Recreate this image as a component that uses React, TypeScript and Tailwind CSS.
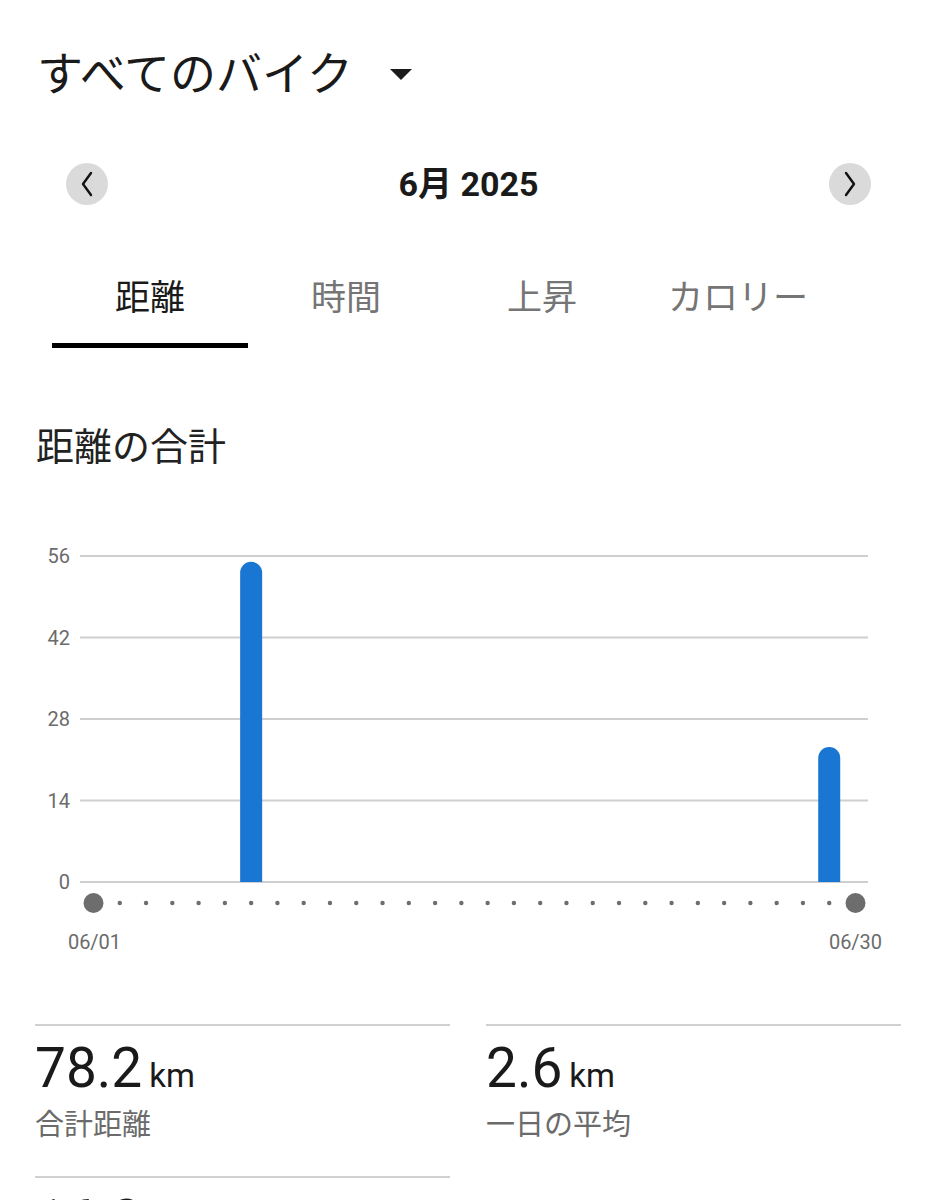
const bars = [
  { day: 7, value: 55.0 },
  { day: 29, value: 23.2 },
];

const stats = [
  { value: "78.2", unit: "km", label: "合計距離" },
  { value: "2.6", unit: "km", label: "一日の平均" },
  { value: "16.3", unit: "km/h", label: "平均速度" },
];

const tabs = ["距離", "時間", "上昇", "カロリー"];

function Chevron({ dir }: { dir: "left" | "right" }) {
  return (
    <svg width={16} height={26} viewBox="0 0 16 26">
      <path
        d={dir === "left" ? "M12 2 L4 13 L12 24" : "M4 2 L12 13 L4 24"}
        fill="none"
        stroke="#111"
        strokeWidth={2.4}
        strokeLinecap="round"
        strokeLinejoin="round"
      />
    </svg>
  );
}

function Chart() {
  // page y minus 520
  const top = 36;
  const zero = 362;
  const left = 80;
  const right = 868;
  const x0 = 93.5;
  const step = (855.5 - 93.5) / 29;
  const ticks = [56, 42, 28, 14, 0];
  const yOf = (v: number) => zero - ((zero - top) * v) / 56;

  return (
    <svg width={936} height={440} className="block">
      {ticks.map((t) => (
        <g key={t}>
          <line x1={left} x2={right} y1={yOf(t)} y2={yOf(t)} stroke="#cfcfcf" strokeWidth={2} />
          <text x={70} y={yOf(t) + 7} textAnchor="end" fontSize={20} fill="#6b6b6b" fontFamily="Roboto, sans-serif">
            {t}
          </text>
        </g>
      ))}
      {bars.map((b) => {
        const cx = x0 + step * (b.day - 1);
        const y = yOf(b.value);
        return (
          <path
            key={b.day}
            d={`M${cx - 11} ${zero} V${y + 11} A11 11 0 0 1 ${cx + 11} ${y + 11} V${zero} Z`}
            fill="#1976d2"
          />
        );
      })}
      {Array.from({ length: 30 }, (_, i) => {
        const cx = x0 + step * i;
        const big = i === 0 || i === 29;
        return <circle key={i} cx={cx} cy={383} r={big ? 10 : 2.2} fill="#6d6d6d" />;
      })}
      <text x={94.5} y={429} textAnchor="middle" fontSize={20} fill="#6b6b6b" fontFamily="Roboto, sans-serif">
        06/01
      </text>
      <text x={855.5} y={429} textAnchor="middle" fontSize={20} fill="#6b6b6b" fontFamily="Roboto, sans-serif">
        06/30
      </text>
    </svg>
  );
}

export default function App() {
  return (
    <div className="h-[1200px] w-[936px] overflow-hidden bg-white font-[Roboto,'Noto_Sans_CJK_JP',sans-serif] text-[#1a1a1a]">
      <div className="flex items-center pl-[37px] pt-[51px]">
        <h1 className="text-[46px] leading-[46px] font-normal">すべてのバイク</h1>
        <svg width={22} height={12} viewBox="0 0 22 12" className="ml-[37px] mt-[1px]">
          <path d="M0 0 H22 L11 11 Z" fill="#1a1a1a" />
        </svg>
      </div>

      <div className="mt-[66px] flex h-[42px] items-center justify-between pl-[66px] pr-[65px]">
        <button type="button" className="flex h-[42px] w-[42px] items-center justify-center rounded-full bg-[#dadada]">
          <Chevron dir="left" />
        </button>
        <span className="text-[34px] leading-[42px] font-bold">6月 2025</span>
        <button type="button" className="flex h-[42px] w-[42px] items-center justify-center rounded-full bg-[#dadada]">
          <Chevron dir="right" />
        </button>
      </div>

      <div className="mt-[76px] flex pl-[52px]">
        {tabs.map((t, i) => (
          <div key={t} className="flex w-[196px] flex-col items-center">
            <span className={`text-[35px] leading-[35px] ${i === 0 ? "text-[#1a1a1a]" : "text-[#757575]"}`}>{t}</span>
            <div className={`mt-[27px] h-[5px] w-full ${i === 0 ? "bg-black" : "bg-transparent"}`} />
          </div>
        ))}
      </div>

      <h2 className="mt-[80px] pl-[36px] text-[38px] leading-[38px] font-normal text-[#222]">距離の合計</h2>

      <div className="mt-[54px]">
        <Chart />
      </div>

      <div className="mt-[64px] grid grid-cols-2 gap-x-[36px] px-[35px]">
        {stats.map((s) => (
          <div key={s.label} className="h-[152px] border-t-2 border-[#d0d0d0]">
            <div className="mt-[14px] flex items-baseline">
              <span className="text-[55px] leading-[56px] text-[#1a1a1a]">{s.value}</span>
              <span className="ml-[7px] text-[33px] text-[#1a1a1a]">{s.unit}</span>
            </div>
            <div className="mt-[10px] text-[29px] leading-[29px] text-[#6b6b6b]">{s.label}</div>
          </div>
        ))}
      </div>
    </div>
  );
}
